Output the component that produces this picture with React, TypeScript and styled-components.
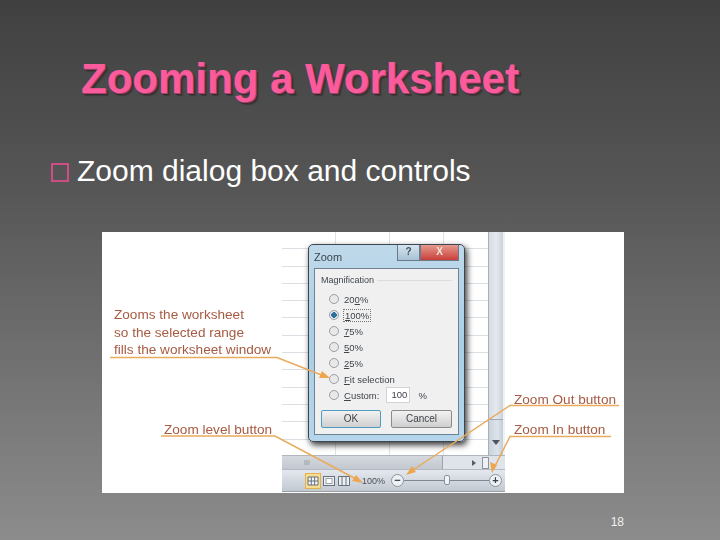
import React from "react";
import styled, { createGlobalStyle } from "styled-components";

const Global = createGlobalStyle`
  html, body { margin: 0; padding: 0; width: 720px; height: 540px; overflow: hidden; }
  body { font-family: "Liberation Sans", Arial, sans-serif; }
`;

const Slide = styled.div`
  position: relative;
  width: 720px;
  height: 540px;
  display: flex;
  flex-direction: column;
  background: linear-gradient(180deg, #404040 0%, #565656 35%, #8c8c8c 100%);
`;

const Title = styled.h1`
  margin: 58px 0 0 81px;
  height: 42px;
  font-size: 42px;
  line-height: 42px;
  font-weight: 700;
  white-space: nowrap;
  color: #fb5b9b;
  text-shadow: 1px 1px 0 #a3436c, 2px 2px 0 #3a2a30, 3px 3px 1px #3a3a3a;
`;

const BulletRow = styled.div`
  display: flex;
  align-items: center;
  gap: 8px;
  margin: 54px 0 0 51px;
  height: 34px;
`;

const BulletBox = styled.span`
  box-sizing: border-box;
  width: 18px;
  height: 19px;
  margin-top: 3px;
  border: 2px solid #cf4d85;
`;

const BulletText = styled.span`
  font-size: 30px;
  line-height: 34px;
  color: #ffffff;
  white-space: nowrap;
`;

const Figure = styled.div`
  position: relative;
  flex: none;
  width: 522px;
  height: 261px;
  margin: 44px 0 0 102px;
  background: #ffffff;
  overflow: hidden;
  filter: blur(0.4px);
`;

const SheetWindow = styled.div`
  display: flex;
  flex-direction: column;
  width: 223px;
  height: 259px;
  margin-left: 180px;
  border-bottom: 1px solid #9a9da2;
  background: #eef1f5;
`;

const SheetBody = styled.div`
  flex: 1;
  display: flex;
  min-height: 0;
`;

const Grid = styled.div`
  flex: 1;
  background-color: #fff;
  background-image:
    repeating-linear-gradient(180deg, transparent 0 16.3px, #dbdfe4 16.3px 17.3px),
    repeating-linear-gradient(90deg, transparent 0 53px, #dfe3e8 53px 54px);
`;

const VScroll = styled.div`
  width: 14px;
  margin-right: 2px;
  display: flex;
  flex-direction: column;
  align-items: center;
  padding-bottom: 8px;
  background: linear-gradient(90deg, #c9d2dc, #dde3ea 60%, #c3ccd6);
  border-left: 1px solid #a8b0ba;
`;

const VThumb = styled.span`
  flex: none;
  align-self: stretch;
  height: 187px;
  margin-bottom: 20px;
  background: linear-gradient(90deg, #d6dce3, #e6e9ee 50%, #cbd2da);
  border-bottom: 1px solid #a0a8b2;
`;

const DownArrow = styled.span`
  width: 0;
  height: 0;
  border-left: 4px solid transparent;
  border-right: 4px solid transparent;
  border-top: 5px solid #4d5560;
`;

const HScrollRow = styled.div`
  display: flex;
  align-items: center;
  height: 13px;
  background: #dfe4ea;
  border-top: 1px solid #b0b6be;
`;

const HTrack = styled.div`
  flex: none;
  width: 161px;
  height: 100%;
  background: linear-gradient(180deg, #d4d9df, #c2c8cf);
  border-right: 1px solid #9da4ad;
  display: flex;
  align-items: center;
  padding-left: 22px;
  box-sizing: border-box;
  color: #8b9097;
  font-size: 7px;
`;

const HArrowSpace = styled.div`
  flex: 1;
  display: flex;
  justify-content: flex-end;
  align-items: center;
  padding-right: 6px;
`;

const RightArrow = styled.span`
  width: 0;
  height: 0;
  border-top: 3px solid transparent;
  border-bottom: 3px solid transparent;
  border-left: 4px solid #555c66;
`;

const SplitBox = styled.span`
  box-sizing: border-box;
  width: 7px;
  height: 12px;
  margin-right: 16px;
  background: #eef1f4;
  border: 1px solid #8d949d;
`;

const StatusBar = styled.div`
  height: 21px;
  display: flex;
  align-items: center;
  padding-left: 23px;
  background: linear-gradient(180deg, #e4e8ee, #c2c9d2);
  border-top: 1px solid #b4bac2;
`;

const ViewIcon = styled.svg<{ $on?: boolean }>`
  flex: none;
  margin-right: ${(p) => (p.$on ? 2 : 3)}px;
`;

const Percent = styled.span`
  font-size: 9px;
  color: #4a4f56;
  margin-left: 9px;
  width: 29px;
`;

const RoundButton = styled.span`
  flex: none;
  box-sizing: border-box;
  width: 13px;
  height: 13px;
  border-radius: 50%;
  background: #eef1f4;
  border: 1px solid #8d949d;
  color: #3d434b;
  font-size: 11px;
  font-weight: 700;
  line-height: 10px;
  text-align: center;
`;

const SliderTrack = styled.span`
  position: relative;
  width: 85px;
  height: 1px;
  background: #7f8790;
`;

const SliderThumb = styled.span`
  position: absolute;
  left: 40px;
  top: -5px;
  width: 6px;
  height: 10px;
  border-radius: 2px;
  background: #f1f3f6;
  border: 1px solid #8d949d;
  box-sizing: border-box;
`;

const Dialog = styled.div`
  position: absolute;
  left: 206px;
  top: 12px;
  width: 157px;
  height: 198px;
  box-sizing: border-box;
  display: flex;
  flex-direction: column;
  padding: 0 5px 6px;
  border-radius: 5px;
  border: 1px solid #3b4650;
  background: linear-gradient(180deg, #bfd9ea, #a9cfe6 50%, #b5d6ea);
  box-shadow: 2px 3px 6px rgba(0, 0, 0, 0.8);
`;

const TitleBar = styled.div`
  flex: none;
  height: 23px;
  display: flex;
  justify-content: space-between;
  align-items: flex-start;
`;

const DialogName = styled.span`
  font-size: 11px;
  color: #3c4650;
  margin-top: 6px;
`;

const WindowButtons = styled.div`
  display: flex;
`;

const WindowButton = styled.span<{ $close?: boolean }>`
  box-sizing: border-box;
  height: 16px;
  width: ${(p) => (p.$close ? 39 : 23)}px;
  font-size: 10px;
  line-height: 14px;
  font-weight: 700;
  text-align: center;
  color: ${(p) => (p.$close ? "#f6e3dc" : "#44525f")};
  background: ${(p) =>
    p.$close ? "linear-gradient(180deg,#e59a8c,#c8403a)" : "linear-gradient(180deg,#d6e4ee,#a8c2d6)"};
  border: 1px solid #6c7a88;
  border-top: none;
`;

const DialogPanel = styled.div`
  flex: 1;
  display: flex;
  flex-direction: column;
  padding: 6px 6px 0;
  background: #f0f0f0;
  border: 1px solid #6f8293;
`;

const GroupLabel = styled.div`
  display: flex;
  align-items: center;
  gap: 3px;
  font-size: 9px;
  line-height: 11px;
  color: #3f454c;
  margin-bottom: 5px;
  &::after {
    content: "";
    flex: 1;
    height: 1px;
    background: #dcdcdc;
  }
`;

const RadioList = styled.div`
  display: flex;
  flex-direction: column;
  padding-left: 8px;
`;

const RadioRow = styled.div`
  height: 16px;
  display: flex;
  align-items: center;
  gap: 5px;
  font-size: 9.5px;
  color: #3f454c;
`;

const Radio = styled.span<{ $on?: boolean }>`
  flex: none;
  box-sizing: border-box;
  width: 10px;
  height: 10px;
  border-radius: 50%;
  border: 1px solid #9a9fa5;
  background: ${(p) =>
    p.$on ? "radial-gradient(circle, #2e6f9e 0 2.6px, #e9eef3 3px)" : "#e9e9e9"};
`;

const Focused = styled.span`
  outline: 1px dotted #777;
  padding: 0 1px;
`;

const CustomInput = styled.span`
  box-sizing: border-box;
  width: 24px;
  height: 16px;
  margin-left: 2px;
  padding-left: 4px;
  background: #fff;
  border: 1px solid #d4d4d4;
  line-height: 14px;
`;

const PercentSign = styled.span`
  margin-left: 3px;
`;

const DialogButtons = styled.div`
  display: flex;
  gap: 10px;
  margin-top: 7px;
`;

const DialogButton = styled.span<{ $primary?: boolean }>`
  box-sizing: border-box;
  height: 18px;
  width: ${(p) => (p.$primary ? 61 : 62)}px;
  font-size: 10px;
  line-height: 16px;
  text-align: center;
  color: #3f454c;
  border-radius: 2px;
  background: linear-gradient(180deg, #f2f2f2, #cfcfcf);
  border: 1px solid ${(p) => (p.$primary ? "#4e9cc0" : "#8b8b8b")};
`;

const Leaders = styled.svg`
  position: absolute;
  left: 0;
  top: 0;
`;

const Callout = styled.div<{ $x: number; $y: number }>`
  position: absolute;
  left: ${(p) => p.$x}px;
  top: ${(p) => p.$y}px;
  font-size: 13.6px;
  line-height: 17.7px;
  color: #a65a42;
  white-space: nowrap;
`;

const RADIOS = [
  { key: "200", label: <span>20<u>0</u>%</span> },
  { key: "100", label: <Focused><u>1</u>00%</Focused>, on: true },
  { key: "75", label: <span><u>7</u>5%</span> },
  { key: "50", label: <span><u>5</u>0%</span> },
  { key: "25", label: <span><u>2</u>5%</span> },
  { key: "fit", label: <span><u>F</u>it selection</span> },
];

const PageNumber = styled.div`
  margin: 22px 96px 0 auto;
  font-size: 12px;
  line-height: 14px;
  color: #f0f0f0;
`;

export default function App() {
  return (
    <Slide>
      <Global />
      <Title>Zooming a Worksheet</Title>
      <BulletRow>
        <BulletBox />
        <BulletText>Zoom dialog box and controls</BulletText>
      </BulletRow>
      <Figure>
        <SheetWindow>
          <SheetBody>
            <Grid />
            <VScroll>
              <VThumb />
              <DownArrow />
            </VScroll>
          </SheetBody>
          <HScrollRow>
            <HTrack>III</HTrack>
            <HArrowSpace>
              <RightArrow />
            </HArrowSpace>
            <SplitBox />
          </HScrollRow>
          <StatusBar>
            <ViewIcon $on width="16" height="16" viewBox="0 0 16 16">
              <rect x="0.5" y="0.5" width="15" height="15" fill="#f9dc8f" stroke="#e2b34d" />
              <path d="M3 4H13V12H3ZM6.3 4V12M9.6 4V12M3 8H13" fill="#f4f6f8" stroke="#66707c" />
            </ViewIcon>
            <ViewIcon width="12" height="12" viewBox="0 0 12 12">
              <rect x="0.5" y="1.5" width="11" height="9" fill="#eef1f4" stroke="#66707c" />
              <rect x="3" y="3.5" width="6" height="5" fill="#fff" stroke="#9aa2ac" />
            </ViewIcon>
            <ViewIcon width="12" height="12" viewBox="0 0 12 12">
              <path d="M.5 1.5H11.5V10.5H.5ZM4 1.5V10.5M8 1.5V10.5" fill="#eef1f4" stroke="#66707c" />
            </ViewIcon>
            <Percent>100%</Percent>
            <RoundButton>−</RoundButton>
            <SliderTrack>
              <SliderThumb />
            </SliderTrack>
            <RoundButton>+</RoundButton>
          </StatusBar>
        </SheetWindow>

        <Dialog>
          <TitleBar>
            <DialogName>Zoom</DialogName>
            <WindowButtons>
              <WindowButton>?</WindowButton>
              <WindowButton $close>X</WindowButton>
            </WindowButtons>
          </TitleBar>
          <DialogPanel>
            <GroupLabel>Magnification</GroupLabel>
            <RadioList>
              {RADIOS.map((r) => (
                <RadioRow key={r.key}>
                  <Radio $on={r.on} />
                  {r.label}
                </RadioRow>
              ))}
              <RadioRow>
                <Radio />
                <span>
                  <u>C</u>ustom:
                </span>
                <CustomInput>100</CustomInput>
                <PercentSign>%</PercentSign>
              </RadioRow>
            </RadioList>
            <DialogButtons>
              <DialogButton $primary>OK</DialogButton>
              <DialogButton>Cancel</DialogButton>
            </DialogButtons>
          </DialogPanel>
        </Dialog>

        <Callout $x={12} $y={74}>
          Zooms the worksheet
          <br />
          so the selected range
          <br />
          fills the worksheet window
        </Callout>
        <Callout $x={62} $y={189}>Zoom level button</Callout>
        <Callout $x={412} $y={159}>Zoom Out button</Callout>
        <Callout $x={412} $y={189}>Zoom In button</Callout>

        <Leaders width="522" height="261" viewBox="0 0 522 261" fill="none">
          <g stroke="#e9aa5c" strokeWidth="1.5">
            <path d="M8 125.5H175L222 144" />
            <path d="M59 204H173L256 248" />
            <path d="M517 173.5H408L308 240" />
            <path d="M509 204.5H408L392 236" />
          </g>
          <g fill="#eda650">
            <path d="M228 146L217 146L220 139Z" />
            <path d="M261 251L250 249L254 243Z" />
            <path d="M304 243L310 234L314 240Z" />
            <path d="M390 241L388 230L395 233Z" />
          </g>
        </Leaders>
      </Figure>
      <PageNumber>18</PageNumber>
    </Slide>
  );
}
